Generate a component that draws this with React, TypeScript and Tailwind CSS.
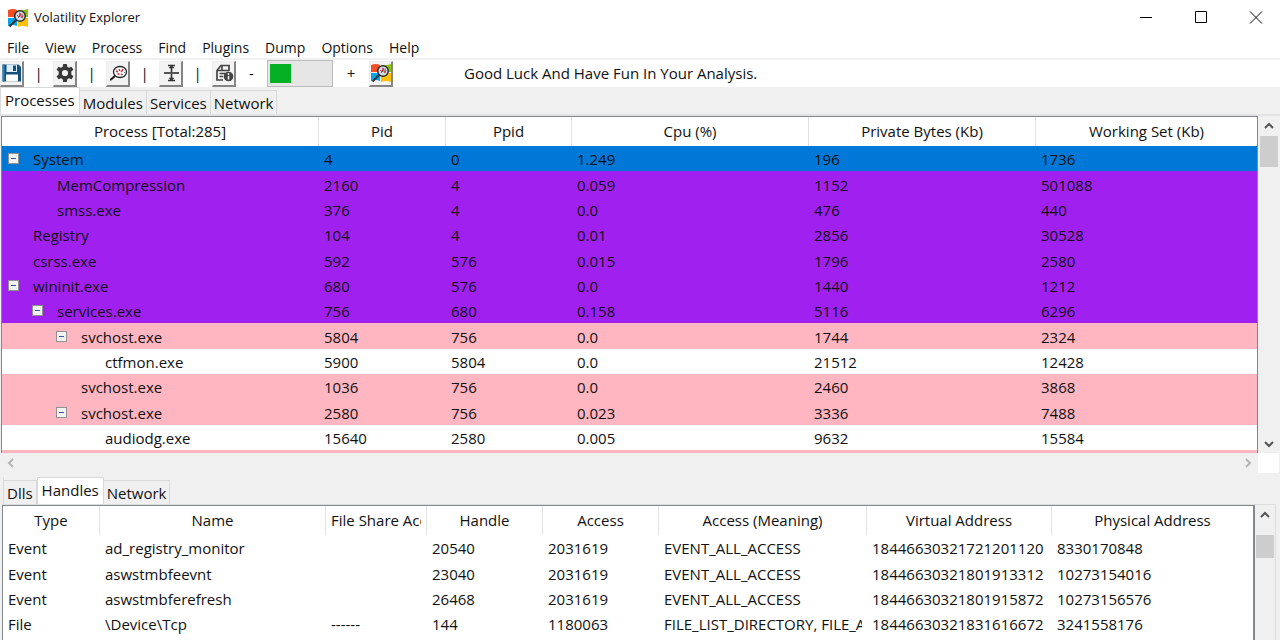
import type { ReactNode } from "react";

type Tone = "selected" | "system" | "service" | "plain";

interface ProcessRow {
  name: string;
  level: number;
  open?: boolean;
  tone: Tone;
  values: string[];
}

const processColumns = [
  { label: "Process [Total:285]", width: "w-[317px]" },
  { label: "Pid", width: "w-[127px]" },
  { label: "Ppid", width: "w-[126px]" },
  { label: "Cpu (%)", width: "w-[237px]" },
  { label: "Private Bytes (Kb)", width: "w-[227px]" },
  { label: "Working Set (Kb)", width: "w-auto" },
];

const processes: ProcessRow[] = [
  { name: "System", level: 0, open: true, tone: "selected", values: ["4", "0", "1.249", "196", "1736"] },
  { name: "MemCompression", level: 1, tone: "system", values: ["2160", "4", "0.059", "1152", "501088"] },
  { name: "smss.exe", level: 1, tone: "system", values: ["376", "4", "0.0", "476", "440"] },
  { name: "Registry", level: 0, tone: "system", values: ["104", "4", "0.01", "2856", "30528"] },
  { name: "csrss.exe", level: 0, tone: "system", values: ["592", "576", "0.015", "1796", "2580"] },
  { name: "wininit.exe", level: 0, open: true, tone: "system", values: ["680", "576", "0.0", "1440", "1212"] },
  { name: "services.exe", level: 1, open: true, tone: "system", values: ["756", "680", "0.158", "5116", "6296"] },
  { name: "svchost.exe", level: 2, open: true, tone: "service", values: ["5804", "756", "0.0", "1744", "2324"] },
  { name: "ctfmon.exe", level: 3, tone: "plain", values: ["5900", "5804", "0.0", "21512", "12428"] },
  { name: "svchost.exe", level: 2, tone: "service", values: ["1036", "756", "0.0", "2460", "3868"] },
  { name: "svchost.exe", level: 2, open: true, tone: "service", values: ["2580", "756", "0.023", "3336", "7488"] },
  { name: "audiodg.exe", level: 3, tone: "plain", values: ["15640", "2580", "0.005", "9632", "15584"] },
];

const toneClass: Record<Tone, string> = {
  selected: "bg-[#0078d7]",
  system: "bg-[#a020f0]",
  service: "bg-[#ffb6c1]",
  plain: "bg-white",
};

const levelClass = ["pl-[6px]", "pl-[30px]", "pl-[54px]", "pl-[78px]"];

const handleColumns = [
  { label: "Type", width: "w-[97px]" },
  { label: "Name", width: "w-[226px]" },
  { label: "File Share Acc", width: "w-[101px]" },
  { label: "Handle", width: "w-[116px]" },
  { label: "Access", width: "w-[116px]" },
  { label: "Access (Meaning)", width: "w-[208px]" },
  { label: "Virtual Address", width: "w-[185px]" },
  { label: "Physical Address", width: "w-auto" },
];

const handles: string[][] = [
  ["Event", "ad_registry_monitor", "", "20540", "2031619", "EVENT_ALL_ACCESS", "18446630321721201120", "8330170848"],
  ["Event", "aswstmbfeevnt", "", "23040", "2031619", "EVENT_ALL_ACCESS", "18446630321801913312", "10273154016"],
  ["Event", "aswstmbferefresh", "", "26468", "2031619", "EVENT_ALL_ACCESS", "18446630321801915872", "10273156576"],
  ["File", "\\Device\\Tcp", "------", "144", "1180063", "FILE_LIST_DIRECTORY, FILE_A", "18446630321831616672", "3241558176"],
];

function LogoIcon({ className }: { className: string }) {
  return (
    <svg viewBox="0 0 20 20" className={className} aria-hidden="true">
      <path d="M0 2Q5 0 9 2V9H0Z" fill="#f25022" />
      <path d="M10 2Q14 3 20 1V9H10Z" fill="#8cc400" />
      <path d="M0 10H9V18Q5 16 0 18Z" fill="#00a4ef" />
      <path d="M10 10H20V19Q14 17 10 19Z" fill="#ffc000" />
      <path d="M8.500 11.500L1.500 18.500" stroke="#333" strokeWidth="2.2" />
      <circle cx="12" cy="8" r="5.300" fill="#d3dde2" stroke="#2d3338" strokeWidth="1.600" />
      <path d="M9 7l2 2 1-3 2 4 1-3M11 5l2 1" stroke="#c9303a" strokeWidth="1" fill="none" />
      <path d="M10 10l2-2M14 5.500v2" stroke="#445555" strokeWidth="0.8" fill="none" />
    </svg>
  );
}

function SaveIcon() {
  return (
    <svg viewBox="0 0 20 20" className="size-5" aria-hidden="true">
      <path d="M0.500 1.500H16.500L19 4V18.500H0.500Z" fill="#174f7c" />
      <path d="M4.500 1.500H15V9H4.500Z" fill="#d9edf8" />
      <path d="M11 2.500H14V8H11Z" fill="#174f7c" />
      <path d="M4 11.500H16V18.500H4Z" fill="#fff" />
      <path d="M0.500 1.500H2.500V18.500H0.500Z" fill="#2f83b7" />
    </svg>
  );
}

function GearIcon() {
  return (
    <svg viewBox="0 0 20 20" className="size-5" aria-hidden="true">
      <path
        d="M8.200 1H11.800L12.300 3.700L14 4.700L16.600 3.700L18.400 6.800L16.300 8.600V11.400L18.400 13.200L16.600 16.300L14 15.300L12.300 16.300L11.800 19H8.200L7.700 16.300L6 15.300L3.400 16.300L1.600 13.200L3.700 11.400V8.600L1.600 6.800L3.400 3.700L6 4.700L7.700 3.700Z M10 6.900A3.100 3.100 0 1 0 10 13.100A3.100 3.100 0 1 0 10 6.900Z"
        fill="#383838"
        fillRule="evenodd"
      />
    </svg>
  );
}

function SearchIcon() {
  return (
    <svg viewBox="0 0 20 20" className="size-5" aria-hidden="true">
      <path d="M7.500 12.500L3 16.500" stroke="#222" strokeWidth="2.200" strokeLinecap="round" />
      <ellipse cx="12" cy="9" rx="6.500" ry="5.500" fill="#fff" stroke="#222" strokeWidth="1.300" />
      <path d="M8 8l2 1M9.500 10.500l2 1M11 6l1 2M13 8l1 1M15 6l-1 2M13 11l1 1" stroke="#d92f3c" strokeWidth="1.500" />
      <path d="M8 6.500l1 1M16 9l1 1M15 11l-1 1" stroke="#444" strokeWidth="0.800" />
    </svg>
  );
}

function SplitIcon() {
  return (
    <svg viewBox="0 0 20 20" className="size-5" aria-hidden="true" fill="none" stroke="#333">
      <path d="M3 10H18" strokeWidth="2" stroke="#555" />
      <path d="M7 2.500H14M7 17.500H14M10.500 2.500V9M10.500 11V17.500" strokeWidth="1.600" />
      <path d="M8 5L10.500 2.500L13 5ZM8 15L10.500 17.500L13 15Z" fill="#333" strokeWidth="0.500" />
    </svg>
  );
}

function ReportIcon() {
  return (
    <svg viewBox="0 0 20 20" className="size-5" aria-hidden="true">
      <path d="M9 17H3V7.500L7 2.500H15V8" fill="none" stroke="#444" strokeWidth="1.700" />
      <path d="M3 7.500H15M8 2.500V7M5.500 10.500H11M5.500 13.500H9" fill="none" stroke="#444" strokeWidth="1.600" />
      <circle cx="14.500" cy="13.500" r="4.800" fill="#444" />
      <path d="M14.500 12.800V16.500" stroke="#fff" strokeWidth="1.500" />
      <circle cx="14.500" cy="11" r="0.900" fill="#fff" />
    </svg>
  );
}

function ToolButton({ label, children }: { label: string; children: ReactNode }) {
  return (
    <button
      aria-label={label}
      className="flex h-[26px] w-6 shrink-0 items-center justify-center border-t border-r-2 border-b-2 border-l border-t-[#eeeeee] border-r-[#858585] border-b-[#858585] border-l-[#eeeeee] bg-[#f3f3f3]"
    >
      {children}
    </button>
  );
}

function Separator() {
  return <span className="w-[29px] shrink-0 text-center">|</span>;
}

function Chevron({ className }: { className: string }) {
  return (
    <svg viewBox="0 0 10 10" className={className} fill="none" stroke="currentColor" strokeWidth="2" aria-hidden="true">
      <path d="M1 7L5 3L9 7" />
    </svg>
  );
}

function Tab({ label, active }: { label: string; active?: boolean }) {
  return active ? (
    <button role="tab" aria-selected="true" className="h-[27px] border-x border-t border-[#d9d9d9] bg-white px-1 pb-[2px] text-[15px] leading-6">
      {label}
    </button>
  ) : (
    <button role="tab" aria-selected="false" className="h-6 border-t border-r border-[#d9d9d9] bg-[#f0f0f0] px-[3px] text-[15px] leading-6">
      {label}
    </button>
  );
}

function HeaderRow({ columns }: { columns: { label: string; width: string }[] }) {
  return (
    <thead>
      <tr className="h-[29px]">
        {columns.map((c) => (
          <th key={c.label} scope="col" className={`${c.width} border-r border-[#e2e2e2] bg-white px-[5px] font-normal last:border-r-0`}>
            <div className="flex justify-center-safe overflow-hidden whitespace-nowrap">{c.label}</div>
          </th>
        ))}
      </tr>
    </thead>
  );
}

const bodyRow = "h-[25px] nth-[3n+2]:h-[26px]";
const bodyCell = "overflow-hidden px-[5px] py-0 pt-[2px] leading-[23px] whitespace-nowrap";

export default function App() {
  return (
    <div className="flex h-screen flex-col overflow-hidden bg-[#f0f0f0] font-['Open_Sans','Noto_Sans',sans-serif] text-[15px] text-[#111111]">
      <header className="flex h-9 shrink-0 items-center bg-white pl-2">
        <LogoIcon className="size-5" />
        <h1 className="ml-[6px] flex-1 text-[13px]">Volatility Explorer</h1>
        <div className="flex h-full text-black">
          <button aria-label="Minimize" className="flex w-[55px] items-center justify-center">
            <svg viewBox="0 0 14 14" className="size-[14px]" stroke="currentColor"><path d="M1 6.500H13" /></svg>
          </button>
          <button aria-label="Maximize" className="mr-1 flex w-[55px] items-center justify-center">
            <svg viewBox="0 0 14 14" className="size-[14px]" fill="none" stroke="currentColor"><path d="M1.500 0.500H12.500V11.500H1.500Z" /></svg>
          </button>
          <button aria-label="Close" className="flex w-12 items-center justify-center">
            <svg viewBox="0 0 14 14" className="size-[14px]" fill="none" stroke="currentColor"><path d="M1 0.500L13 12.500M13 0.500L1 12.500" /></svg>
          </button>
        </div>
      </header>

      <nav aria-label="Main menu" className="flex h-6 shrink-0 items-center gap-4 border-b-2 border-[#f0f0f0] bg-white pt-[2px] pl-[7px] text-sm">
        {["File", "View", "Process", "Find", "Plugins", "Dump", "Options", "Help"].map((m) => (
          <button key={m}>{m}</button>
        ))}
      </nav>

      <div role="toolbar" aria-label="Tools" className="flex h-[27px] shrink-0 items-center bg-white">
        <ToolButton label="Save"><SaveIcon /></ToolButton>
        <Separator />
        <ToolButton label="Options"><GearIcon /></ToolButton>
        <Separator />
        <ToolButton label="Find process"><SearchIcon /></ToolButton>
        <Separator />
        <ToolButton label="Split view"><SplitIcon /></ToolButton>
        <Separator />
        <ToolButton label="Report"><ReportIcon /></ToolButton>
        <span className="w-[31px] text-center">-</span>
        <div role="progressbar" aria-label="Activity" className="h-full w-[66px] border border-[#bcbcbc] bg-[#e6e6e6] px-[2px] py-[3px]">
          <div className="h-[19px] w-[21px] bg-[#06b025]" />
        </div>
        <span className="w-9 text-center">+</span>
        <ToolButton label="About"><LogoIcon className="size-5" /></ToolButton>
        <p className="ml-[71px]">Good Luck And Have Fun In Your Analysis.</p>
      </div>

      <div role="tablist" aria-label="System views" className="flex h-[29px] shrink-0 items-end border-b-2 border-[#e2e2e2] pt-[2px]">
        <Tab label="Processes" active />
        <Tab label="Modules" />
        <Tab label="Services" />
        <Tab label="Network" />
      </div>

      <main className="flex min-h-0 flex-1 flex-col">
        <section aria-label="Processes" className="shrink-0 pr-px pl-px">
          <div className="flex h-[337px]">
            <div className="min-w-0 flex-1 overflow-hidden border-t border-r border-l border-[#828790] bg-white">
              <table className="w-full table-fixed border-separate border-spacing-0">
                <HeaderRow columns={processColumns} />
                <tbody>
                  {processes.map((p) => (
                    <tr key={p.values[0]} className={`${bodyRow} ${toneClass[p.tone]}`}>
                      <td className={`overflow-hidden p-0 ${levelClass[p.level]}`}>
                        <div className="flex items-center">
                          <span className="flex w-[25px] shrink-0">
                            {p.open && (
                              <button aria-label={`Collapse ${p.name}`} className="flex size-[11px] items-center justify-center border border-[#919191] bg-[#f2f2f2]">
                                <span className="h-px w-[5px] bg-[#3a55a5]" />
                              </button>
                            )}
                          </span>
                          <span className="pt-[2px] leading-[23px]">{p.name}</span>
                        </div>
                      </td>
                      {p.values.map((v, i) => (
                        <td key={i} className={bodyCell}>{v}</td>
                      ))}
                    </tr>
                  ))}
                  <tr className="h-[25px] bg-[#ffb6c1]">
                    <td colSpan={6} />
                  </tr>
                </tbody>
              </table>
            </div>
            <div className="flex w-[21px] shrink-0 flex-col items-center pt-[5px] pb-1 text-[#555555]">
              <Chevron className="size-[10px]" />
              <div className="mt-[5px] h-[31px] w-[18px] bg-[#cdcdcd]" />
              <Chevron className="mt-auto size-[10px] rotate-180" />
            </div>
          </div>
          <div className="flex h-5">
            <div className="flex flex-1 items-center justify-between px-[5px] text-[#b5b5b5]">
              <Chevron className="size-[10px] -rotate-90" />
              <Chevron className="size-[10px] rotate-90" />
            </div>
            <div className="w-[21px] bg-white" />
          </div>
        </section>

        <div role="tablist" aria-label="Process details" className="mt-1 flex h-[27px] shrink-0 items-end pl-[3px]">
          <div className="flex items-end border-l border-[#d9d9d9]">
            <Tab label="Dlls" />
            <Tab label="Handles" active />
            <Tab label="Network" />
          </div>
        </div>

        <section aria-label="Handles" className="mr-1 ml-[2px] flex min-h-0 flex-1 border-t border-r border-[#dcdcdc]">
          <div className="min-w-0 flex-1 overflow-hidden border-t border-r-2 border-l border-[#828790] bg-white">
            <table className="w-full table-fixed border-separate border-spacing-0">
              <HeaderRow columns={handleColumns} />
              <tbody>
                {handles.map((row) => (
                  <tr key={row[3]} className={bodyRow}>
                    {row.map((v, i) => (
                      <td key={i} className={bodyCell}>
                        <div className="overflow-hidden">{v}</div>
                      </td>
                    ))}
                  </tr>
                ))}
              </tbody>
            </table>
          </div>
          <div className="flex w-5 shrink-0 flex-col items-center pt-[5px] text-[#555555]">
            <Chevron className="size-[10px]" />
            <div className="mt-[15px] h-[23px] w-[18px] bg-[#cdcdcd]" />
          </div>
        </section>
      </main>
    </div>
  );
}
